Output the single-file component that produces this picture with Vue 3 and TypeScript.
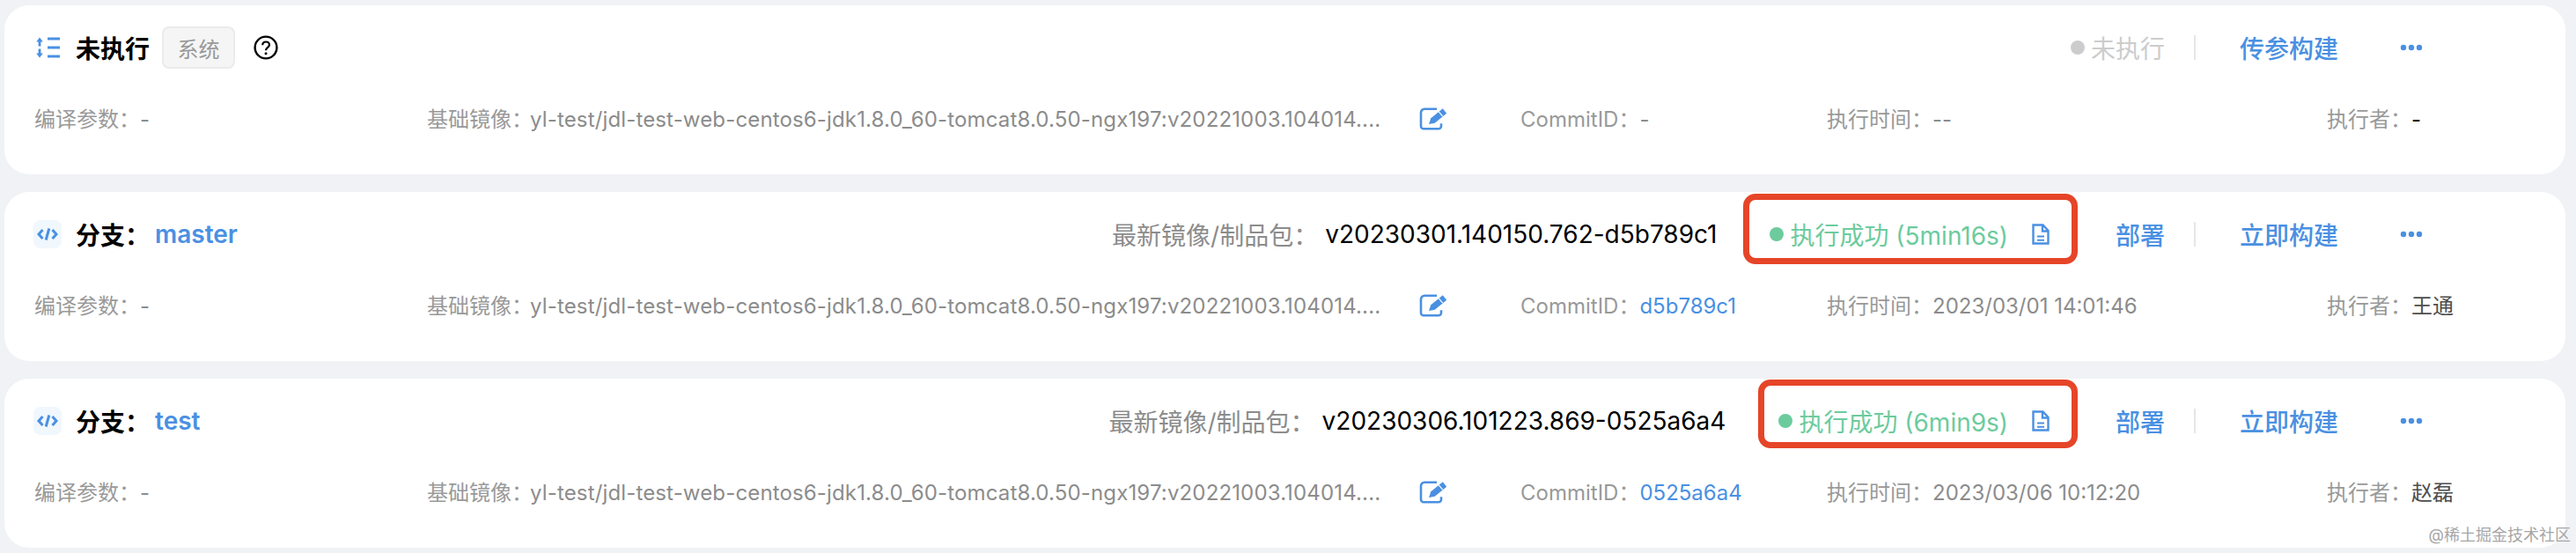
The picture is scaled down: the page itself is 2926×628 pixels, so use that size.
<script setup lang="ts">
interface Row {
  kind: 'idle' | 'branch';
  branch?: string;
  version?: string;
  duration?: string;
  // the red annotation box isn't drawn the same on both rows
  markStyle?: Record<string, string>;
  commit: string;
  time: string;
  user: string;
}

const rows: Row[] = [
  { kind: 'idle', commit: '-', time: '--', user: '-' },
  {
    kind: 'branch',
    branch: 'master',
    version: 'v20230301.140150.762-d5b789c1',
    duration: '5min16s',
    markStyle: { left: '-30px', top: '-26px', height: '80px' },
    commit: 'd5b789c1',
    time: '2023/03/01 14:01:46',
    user: '王通',
  },
  {
    kind: 'branch',
    branch: 'test',
    version: 'v20230306.101223.869-0525a6a4',
    duration: '6min9s',
    markStyle: { left: '-23px', top: '-27px', height: '78px' },
    commit: '0525a6a4',
    time: '2023/03/06 10:12:20',
    user: '赵磊',
  },
];

const image = 'yl-test/jdl-test-web-centos6-jdk1.8.0_60-tomcat8.0.50-ngx197:v20221003.104014....';
</script>

<template>
  <div class="page">
    <section v-for="row in rows" :key="row.branch ?? 'idle'" class="card">
      <div class="head">
        <div class="head-left">
          <template v-if="row.kind === 'idle'">
            <svg class="sort-icon" width="28" height="28" viewBox="0 0 28 28" fill="none">
              <path d="M4 2.500 7.800 7.500H5.400v5H2.600v-5H.2z" fill="#4a90e2" />
              <path d="M2.600 15.500h2.800v5h2.400L4 25.500.2 20.500h2.400z" fill="#4a90e2" />
              <path d="M13 4h14M13 14h14M13 24h14" stroke="#4a90e2" stroke-width="3" />
            </svg>
            <span class="title">未执行</span>
            <span class="tag">系统</span>
            <svg class="help" width="28" height="28" viewBox="0 0 28 28" fill="none">
              <circle cx="14" cy="14" r="12.400" stroke="#000" stroke-width="2.400" />
              <path d="M10.200 11.200c0-2.200 1.700-3.700 3.900-3.700s3.800 1.400 3.800 3.400c0 3-3.900 3-3.900 6.300" stroke="#000" stroke-width="2.200" />
              <circle cx="14" cy="20.800" r="1.500" fill="#000" />
            </svg>
          </template>
          <template v-else>
            <span class="code-icon">
              <svg width="24" height="14" viewBox="0 0 24 14" fill="none" stroke="#4a90e2" stroke-width="3">
                <path d="M6.500 2 2 7l4.500 5M17.500 2 22 7l-4.500 5" />
                <path d="M13.800.5 10.200 13.500" />
              </svg>
            </span>
            <span class="title">分支：</span>
            <span class="branch">{{ row.branch }}</span>
          </template>
        </div>

        <div class="head-right">
          <template v-if="row.kind === 'idle'">
            <span class="status idle"><i class="dot" />未执行</span>
            <span class="divider first" />
            <a class="action">传参构建</a>
          </template>
          <template v-else>
            <span class="version-label">最新镜像/制品包：</span>
            <span class="version">{{ row.version }}</span>
            <span class="status ok">
              <i class="dot" />执行成功 ({{ row.duration }})
              <svg class="doc" width="20" height="24" viewBox="0 0 20 24" fill="none" stroke="#4a90e2" stroke-width="2.400">
                <path d="M1.500 1.500h11l6 6.500v14.500h-17z" />
                <path d="M12 1.500V8.500h6.500" />
                <path d="M6 14.500h8M6 18.800h8" stroke-width="2" />
              </svg>
              <b class="mark" :style="row.markStyle" />
            </span>
            <a class="action deploy">部署</a>
            <span class="divider" />
            <a class="action">立即构建</a>
          </template>
          <svg class="more" width="26" height="8" viewBox="0 0 26 8">
            <circle cx="4" cy="4" r="3.200" fill="#4a90e2" />
            <circle cx="13" cy="4" r="3.200" fill="#4a90e2" />
            <circle cx="22" cy="4" r="3.200" fill="#4a90e2" />
          </svg>
        </div>
      </div>

      <div class="meta">
        <div class="cell"><span class="key">编译参数：</span><span class="val">-</span></div>
        <div class="cell">
          <span class="key">基础镜像：</span><span class="val image">{{ image }}</span>
          <svg class="edit" width="34" height="26" viewBox="0 0 34 26" fill="none">
            <path d="M20 1.800H6a4 4 0 0 0-4 4v15.400a3 3 0 0 0 3 3h17a3 3 0 0 0 3-3v-3" stroke="#4a90e2" stroke-width="2.600" />
            <path d="M26.800 1.300 31.200 6.700 17.700 17.700 11 19l2.300-6.700z" fill="#4a90e2" />
            <path d="M26.700 10.200 22.300 4.800" stroke="#fff" stroke-width="1.200" />
          </svg>
        </div>
        <div class="cell">
          <span class="key">CommitID：</span><span class="val" :class="{ link: row.kind === 'branch' }">{{ row.commit }}</span>
        </div>
        <div class="cell"><span class="key">执行时间：</span><span class="val">{{ row.time }}</span></div>
        <div class="cell"><span class="key">执行者：</span><span class="val user" :class="{ strong: row.kind === 'idle' }">{{ row.user }}</span></div>
      </div>
    </section>
    <span class="watermark">@稀土掘金技术社区</span>
  </div>
</template>

<style>
html,
body {
  background: #f0f2f5;
}
</style>

<style scoped>
.page {
  position: relative;
  width: 2926px;
  height: 628px;
  box-sizing: border-box;
  padding: 6px 12px 0 5px;
  display: flex;
  flex-direction: column;
  gap: 20px;
  background: #f0f2f5;
  font-family: Inter, "Noto Sans CJK SC", sans-serif;
  overflow: hidden;
}

.card {
  height: 192px;
  box-sizing: border-box;
  padding: 24px 34px 0;
  background: #fff;
  border-radius: 28px;
}

.head {
  height: 48px;
  display: flex;
  align-items: center;
  justify-content: space-between;
}

.head-left,
.head-right {
  display: flex;
  align-items: center;
}

.sort-icon {
  margin-left: 2px;
}

.title {
  margin-left: 17px;
  font-size: 28px;
  font-weight: 600;
  color: #000;
}

.tag {
  margin-left: 14px;
  width: 83px;
  height: 48px;
  box-sizing: border-box;
  display: flex;
  align-items: center;
  justify-content: center;
  border: 2px solid #ebebeb;
  border-radius: 8px;
  background: #f5f5f5;
  font-size: 24px;
  color: #999;
}

.help {
  margin-left: 21px;
}

.code-icon {
  width: 32px;
  height: 32px;
  margin-left: -1px;
  display: flex;
  align-items: center;
  justify-content: center;
  border-radius: 8px;
  background: #f0f7fd;
}

.code-icon + .title {
  margin-left: 16px;
}

.branch {
  margin-left: 6px;
  font-size: 28px;
  font-weight: 600;
  color: #4a90e2;
}

.head-right {
  font-size: 28px;
  padding-right: 128px;
}

.version-label {
  color: #8c8c8c;
}

.version {
  margin-left: 8px;
  color: #000;
}

.status {
  position: relative;
  display: flex;
  align-items: center;
  white-space: pre;
}

.status.idle {
  color: #ccc;
}

.status.ok {
  margin-left: 60px;
  color: #6ccb9d;
}

.dot {
  width: 16px;
  height: 16px;
  margin-right: 7px;
  border-radius: 50%;
  background: currentColor;
}

.doc {
  margin-left: 19px;
}

.mark {
  position: absolute;
  right: -32px;
  box-sizing: border-box;
  border: 7px solid #e64528;
  border-radius: 14px;
}

.divider {
  width: 2px;
  height: 28px;
  margin: 0 50px 0 33px;
  background: #e6e6e6;
}

.action {
  font-weight: 500;
  color: #4a90e2;
}

.deploy {
  margin-left: 75px;
}

.more {
  margin-left: 70px;
}

.meta {
  margin-top: 40px;
  display: grid;
  grid-template-columns: 446px 1242px 348px 568px 1fr;
  align-items: center;
  font-size: 24px;
  line-height: 36px;
}

.cell {
  position: relative;
  white-space: nowrap;
}

.key {
  color: #999;
}

.val {
  color: #8c8c8c;
}

.val.image {
  margin-left: -3px;
  letter-spacing: 0.15px;
}

.val.link {
  color: #4a90e2;
}

.val.user {
  color: #4d4d4d;
}

.val.user.strong {
  color: #000;
}

.edit {
  position: absolute;
  left: 1127px;
  top: 4px;
}

.watermark {
  position: absolute;
  right: 6px;
  bottom: 9px;
  font-size: 18px;
  color: #a6a6a6;
}
</style>
